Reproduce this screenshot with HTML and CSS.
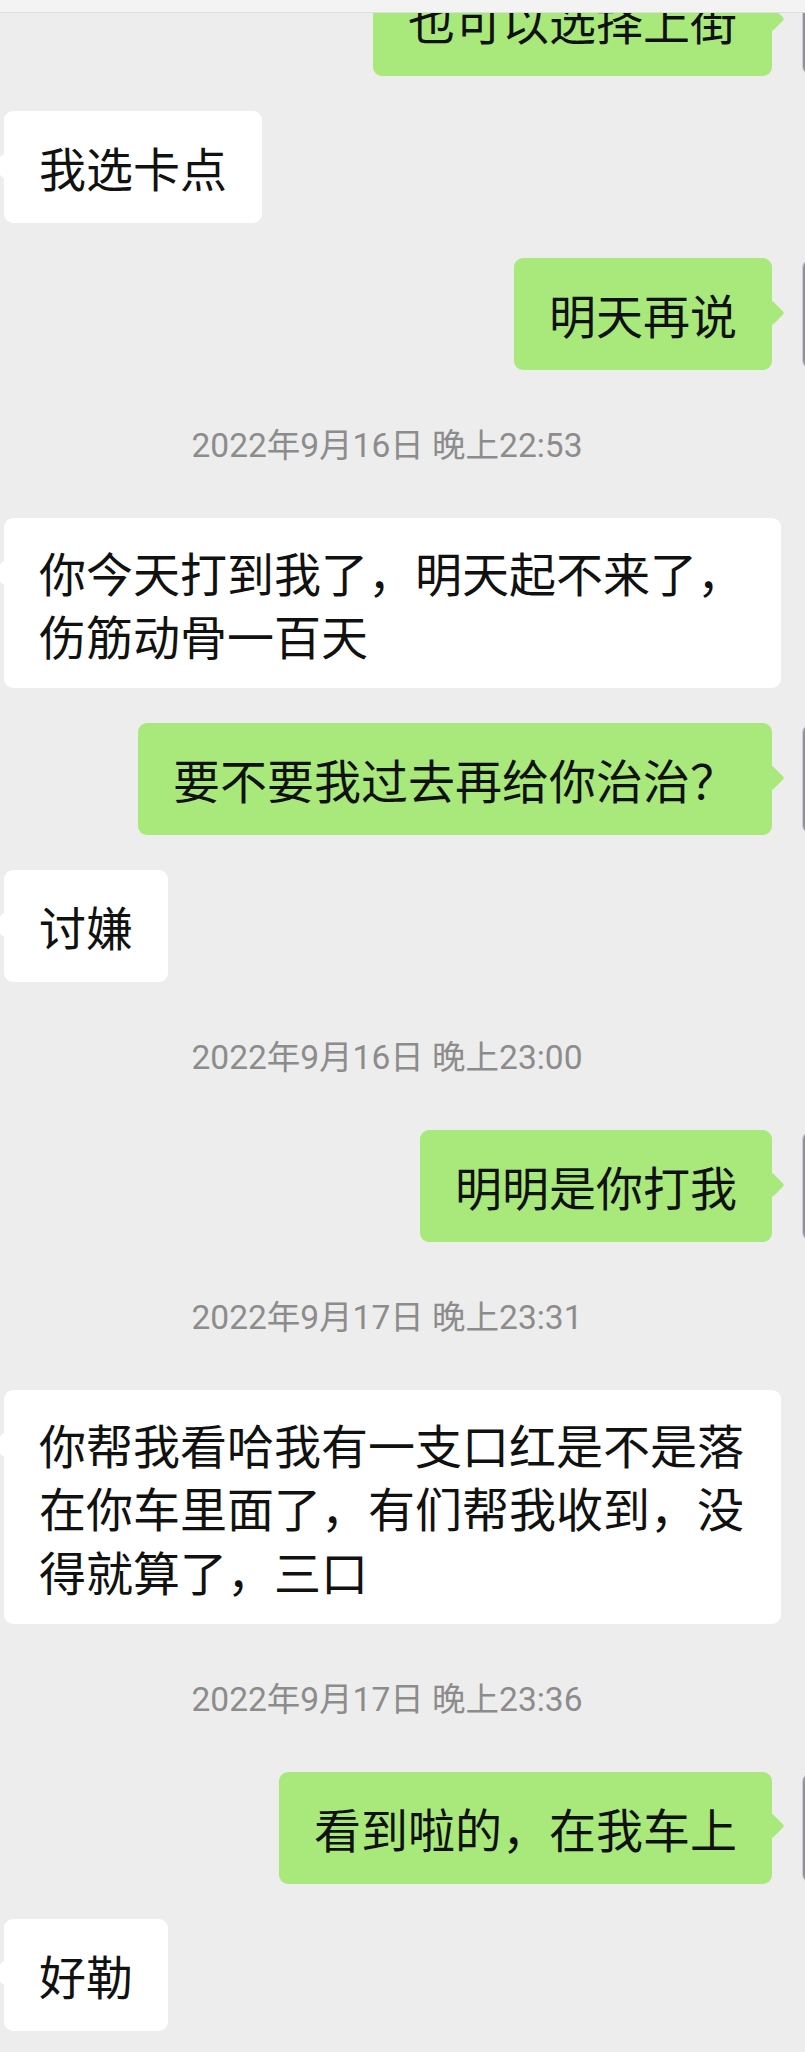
FILE: index.html
```html
<!DOCTYPE html>
<html lang="zh-CN">
<head>
<meta charset="utf-8">
<title>聊天记录</title>
<link rel="stylesheet" href="styles.css">
</head>
<body>
<div class="screen">
  <div class="topbar"></div>
  <div class="chat">
    <div class="row me first"><div class="bubble green">也可以选择上街</div><div class="avatar"></div></div>
    <div class="row them"><div class="bubble white">我选卡点</div></div>
    <div class="row me"><div class="bubble green">明天再说</div><div class="avatar"></div></div>
    <div class="time">2022年9月16日 晚上22:53</div>
    <div class="row them"><div class="bubble white">你今天打到我了，明天起不来了，伤筋动骨一百天</div></div>
    <div class="row me"><div class="bubble green">要不要我过去再给你治治？</div><div class="avatar"></div></div>
    <div class="row them"><div class="bubble white">讨嫌</div></div>
    <div class="time">2022年9月16日 晚上23:00</div>
    <div class="row me"><div class="bubble green">明明是你打我</div><div class="avatar"></div></div>
    <div class="time">2022年9月17日 晚上23:31</div>
    <div class="row them"><div class="bubble white">你帮我看哈我有一支口红是不是落在你车里面了，有们帮我收到，没得就算了，三口</div></div>
    <div class="time">2022年9月17日 晚上23:36</div>
    <div class="row me"><div class="bubble green">看到啦的，在我车上</div><div class="avatar"></div></div>
    <div class="row them"><div class="bubble white">好勒</div></div>
  </div>
</div>
</body>
</html>
```
FILE: styles.css
```css
html, body {
  margin: 0;
  padding: 0;
  background: #ededed;
}

.screen {
  width: 805px;
  height: 2052px;
  overflow: hidden;
  display: flex;
  flex-direction: column;
  background: #ededed;
}

.topbar {
  flex: none;
  height: 12px;
  background: #f3f3f3;
  border-bottom: 1px solid #dedede;
}

.chat {
  flex: 1;
  overflow: hidden;
  display: flex;
  flex-direction: column;
  gap: 35px;
}

.row {
  display: flex;
  align-items: flex-start;
}

.row.me {
  justify-content: flex-end;
}

.row.them {
  padding-left: 4px;
}

.row.first {
  margin-top: -49px;
}

.bubble {
  position: relative;
  box-sizing: border-box;
  min-height: 112px;
  max-width: 777px;
  padding: 21.5px 35px;
  border-radius: 9px;
  display: flex;
  align-items: center;
  font-family: "Noto Sans CJK SC", sans-serif;
  font-size: 47px;
  line-height: 63.5px;
  color: #111;
}

.bubble::before {
  content: "";
  position: absolute;
  top: 45.5px;
  width: 18px;
  height: 18px;
  background: inherit;
  border-radius: 3px;
  transform: rotate(45deg);
}

.bubble.green {
  background: #a9e97b;
}

.bubble.green::before {
  right: -9px;
}

.bubble.white {
  background: #ffffff;
}

.bubble.white::before {
  left: -9px;
}

.avatar {
  flex: none;
  box-sizing: border-box;
  width: 112px;
  height: 112px;
  margin-left: 30px;
  margin-right: -109px;
  border-radius: 10px;
  background: #938e9c;
  border: 1px solid #cfcdd2;
}

.time {
  flex: none;
  height: 78px;
  margin-right: 31px;
  text-align: center;
  font-family: Roboto, "Noto Sans CJK SC", sans-serif;
  font-size: 33.5px;
  line-height: 81px;
  color: #8c8c8c;
  white-space: nowrap;
}
```
